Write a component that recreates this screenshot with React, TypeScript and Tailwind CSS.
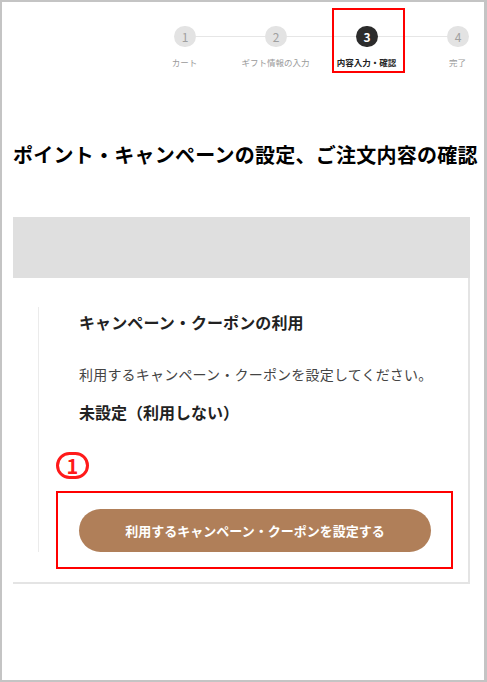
const steps = [
    { no: 1, label: 'カート' },
    { no: 2, label: 'ギフト情報の入力' },
    { no: 3, label: '内容入力・確認' },
    { no: 4, label: '完了' },
];
const current = 3;

const Stepper = () => (
    <div className="relative h-[76px]">
        <div className="flex items-center pt-[24px] pl-[172px]">
            {steps.map((step, i) => (
                <div key={step.no} className="flex items-center">
                    {i > 0 && <div className="h-px w-[69px] bg-[#e6e6e6]" />}
                    <div
                        className={
                            step.no === current
                                ? 'flex h-[21px] w-[22px] items-center justify-center rounded-full bg-[#2c2c2c] text-[12px] font-bold text-white'
                                : 'flex h-[21px] w-[22px] items-center justify-center rounded-full bg-[#e3e3e3] text-[12px] text-[#a0a0a0]'
                        }
                    >
                        {step.no}
                    </div>
                </div>
            ))}
        </div>
        <div className="mt-[9px] flex pl-[137px]">
            {steps.map((step) => (
                <div
                    key={step.no}
                    className={
                        step.no === current
                            ? 'w-[91px] shrink-0 text-center text-[8.5px] leading-[12px] font-bold text-[#222]'
                            : 'w-[91px] shrink-0 text-center text-[8.5px] leading-[12px] text-[#9a9a9a]'
                    }
                >
                    {step.label}
                </div>
            ))}
        </div>
        {/* annotation */}
        <div className="absolute top-[6px] left-[330px] h-[65px] w-[73px] border-2 border-[#ff0000]" />
    </div>
);

export default function App() {
    return (
        <div
            className="h-[682px] w-[487px] overflow-hidden border-t-2 border-r-[3px] border-b-2 border-l-2 border-[#c4c4c4] bg-white text-[#222]"
            style={{ fontFamily: '"Noto Sans CJK JP", "Noto Sans", sans-serif' }}
        >
            <Stepper />

            <h1 className="mt-[63px] pl-[11px] text-[20px] leading-[28px] font-bold tracking-[0.25px] text-black">
                ポイント・キャンペーンの設定、ご注文内容の確認
            </h1>

            <div className="mt-[48px] ml-[11px] w-[457px]">
                <div className="h-[61px] bg-[#dfdfdf]" />
                <div className="border-r-2 border-b-2 border-[#e4e4e4] pt-[29px] pb-[30px] pl-[25px]">
                    <div className="border-l border-[#ebebeb] pt-[3px] pl-[40px]">
                        <h2 className="text-[16px] leading-[24px] font-bold tracking-[0.1px] text-[#222]">
                            キャンペーン・クーポンの利用
                        </h2>
                        <p className="mt-[30px] text-[14px] leading-[20px] tracking-[0.2px] text-[#444]">
                            利用するキャンペーン・クーポンを設定してください。
                        </p>
                        <p className="mt-[16px] text-[16px] leading-[24px] font-bold text-[#222]">
                            未設定（利用しない）
                        </p>
                        <div className="relative mt-[85px] w-[352px]">
                            <button className="flex h-[43px] w-[352px] items-center justify-center rounded-full bg-[#b07f59] text-[13px] font-bold text-white">
                                利用するキャンペーン・クーポンを設定する
                            </button>
                            {/* annotation */}
                            <div className="absolute -top-[18px] -left-[23px] h-[78px] w-[397px] border-2 border-[#ff0000]" />
                            <div className="absolute -top-[57px] -left-[23px] flex h-[27px] w-[33px] items-center justify-center rounded-full border-[3px] border-[#ff1a1a] text-[20px] leading-none font-bold text-[#ff1a1a]">
                                1
                            </div>
                        </div>
                    </div>
                </div>
            </div>
        </div>
    );
}
